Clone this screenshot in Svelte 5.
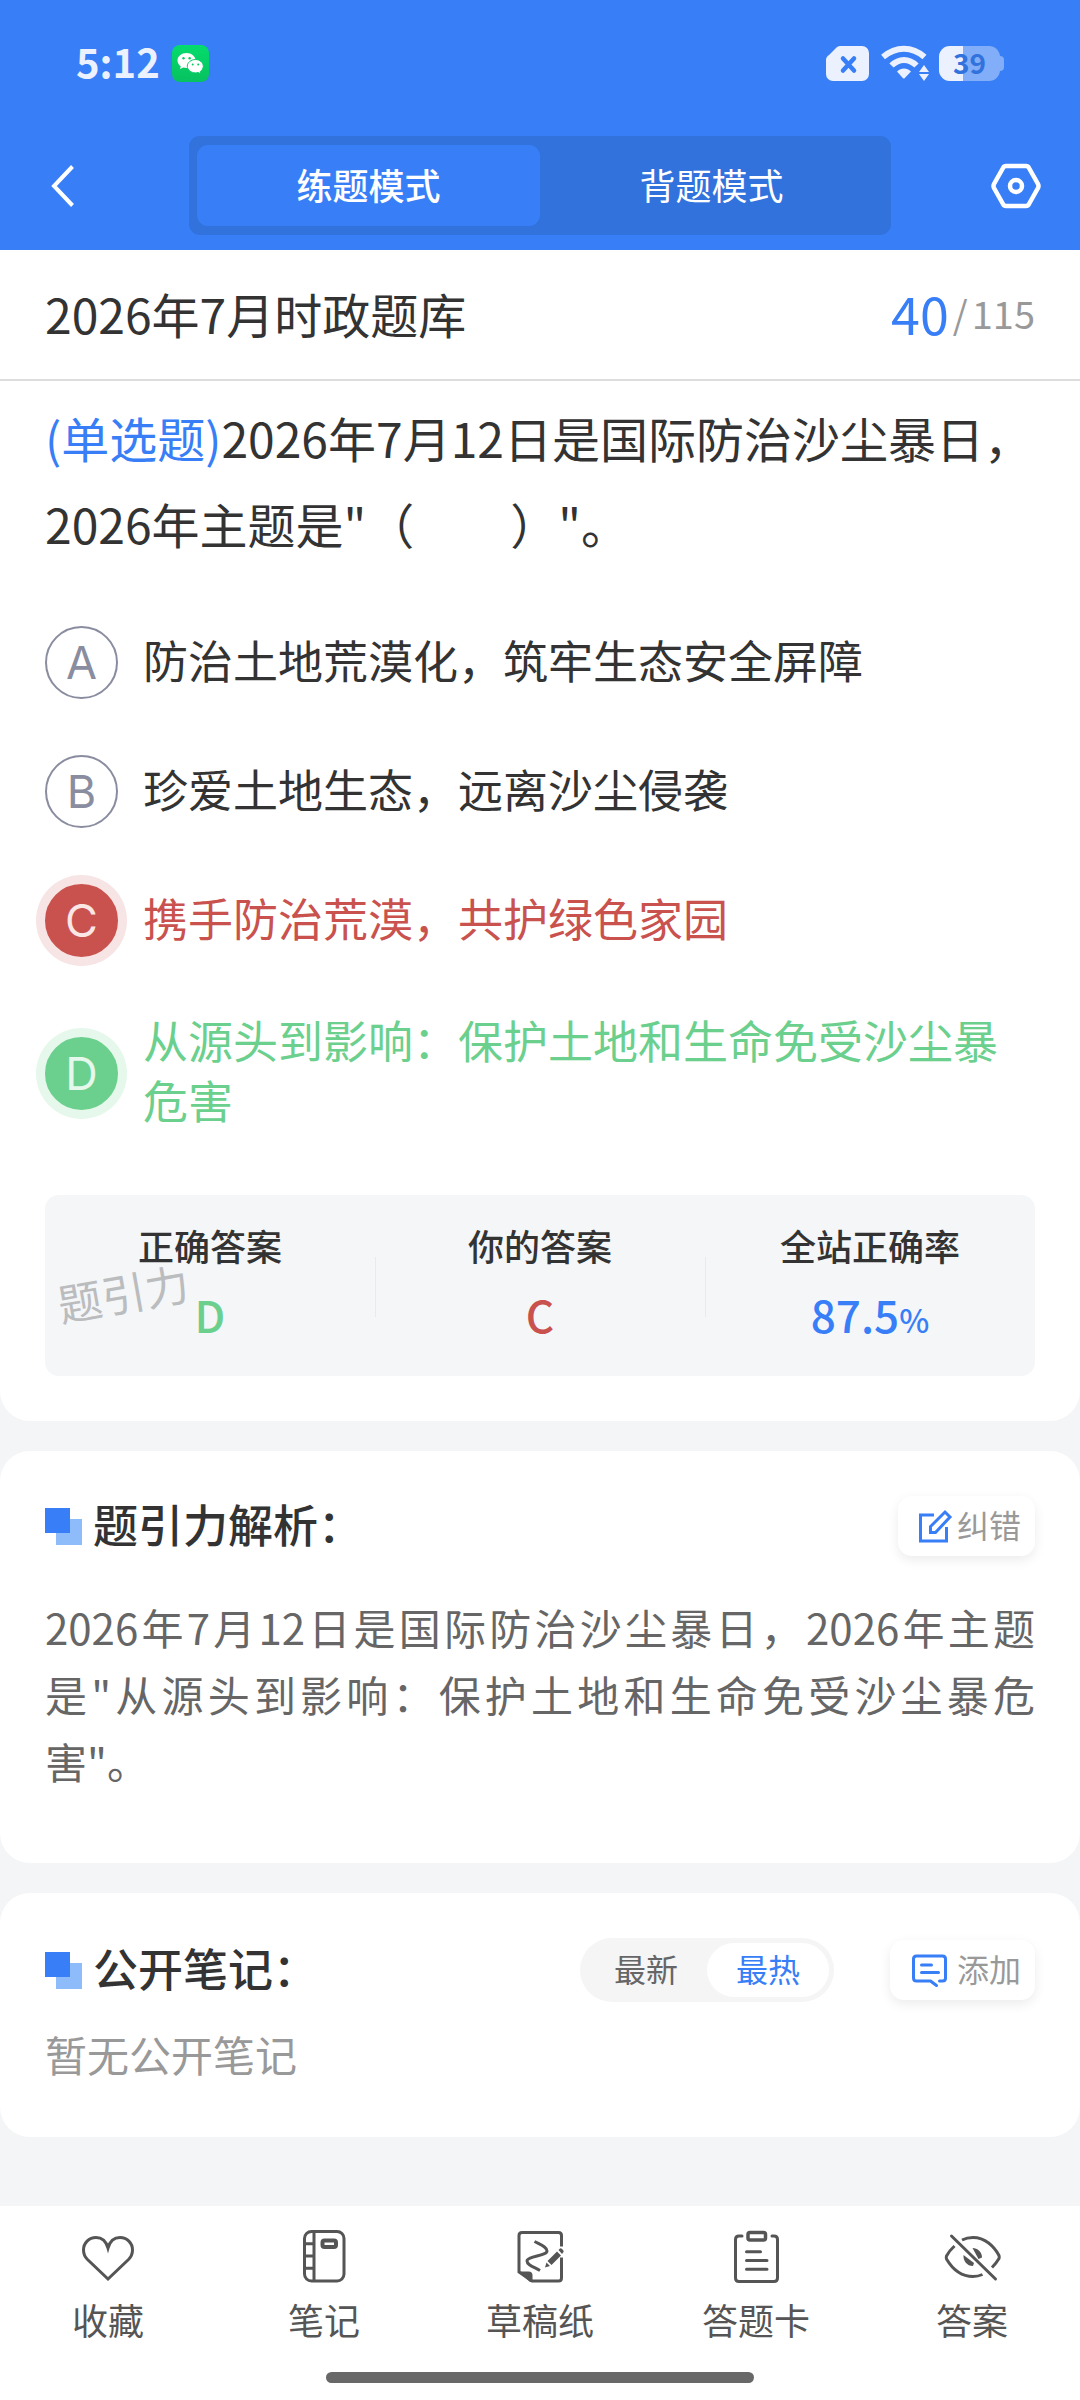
<script lang="ts">
	type Option = { key: string; text: string; state: "" | "wrong" | "right" };

	const modes = ["练题模式", "背题模式"];
	const sorts = ["最新", "最热"];

	const options: Option[] = [
		{ key: "A", text: "防治土地荒漠化，筑牢生态安全屏障", state: "" },
		{ key: "B", text: "珍爱土地生态，远离沙尘侵袭", state: "" },
		{ key: "C", text: "携手防治荒漠，共护绿色家园", state: "wrong" },
		{ key: "D", text: "从源头到影响：保护土地和生命免受沙尘暴危害", state: "right" },
	];

	let mode = $state(0);
	let sort = $state(1);
	let battery = $state(39);
</script>

<div class="page">
	<header class="header">
		<div class="status">
			<span class="time">5:12</span>
			<svg class="wechat" viewBox="0 0 37 37" aria-hidden="true">
				<defs>
					<linearGradient id="wx" x1="0" y1="0" x2="0" y2="1">
						<stop offset="0" stop-color="#04dc6c" />
						<stop offset="1" stop-color="#07c160" />
					</linearGradient>
				</defs>
				<rect width="37" height="37" rx="8" fill="url(#wx)" />
				<path d="M14.500 8C9.500 8 5.500 11.300 5.500 15.500c0 2.400 1.300 4.400 3.300 5.800L8 24l3.300-1.600c1 .3 2.100.5 3.200.5 5 0 9-3.300 9-7.400S19.500 8 14.500 8z" fill="#fff" />
				<circle cx="11.500" cy="13.200" r="1.200" fill="#06cf66" />
				<circle cx="17.600" cy="13.200" r="1.200" fill="#06cf66" />
				<path d="M23.500 14.500c-4.500 0-8.200 3-8.200 6.700s3.700 6.700 8.200 6.700c.9 0 1.800-.1 2.600-.4l2.800 1.300-.6-2.300c1.800-1.200 3-3.100 3-5.300 0-3.700-3.500-6.700-7.800-6.700z" fill="#fff" stroke="#06cb65" stroke-width="1" />
				<circle cx="20.700" cy="19.500" r="1" fill="#06cb65" />
				<circle cx="26.200" cy="19.500" r="1" fill="#06cb65" />
			</svg>

			<svg class="sim" viewBox="0 0 43 35" aria-hidden="true">
				<path d="M14 0h22a7 7 0 0 1 7 7v21a7 7 0 0 1-7 7H7a7 7 0 0 1-7-7V14c0-2 1-4 3-5l7-7c1-1 2-2 4-2z" fill="#ebf1fe" />
				<path d="M17 12.500l11 12M28 12.500l-11 12" stroke="#387ef6" stroke-width="4.500" stroke-linecap="round" />
			</svg>
			<svg class="wifi" viewBox="0 0 47 36" aria-hidden="true">
				<g fill="none" stroke="#ebf1fe" stroke-width="6">
					<path d="M2 12C15 1 31 1 43.500 12" />
					<path d="M10.500 20.500C18 13 28 13 35.500 20.500" />
				</g>
				<path d="M16 26.500c4-4 10-4 14 0L23.800 33q-1 1-2 0z" fill="#ebf1fe" />
				<path d="M43 20l5 7h-10zM38 29h10l-5 7z" fill="#ebf1fe" />
			</svg>
			<span class="battery">
				<span class="cell">
					<span class="charge" style="width: {battery}%"></span>
					<span class="level">{battery}</span>
				</span>
				<span class="cap"></span>
			</span>
		</div>

		<div class="toolbar">
			<button class="icon-btn back" aria-label="返回">
				<svg width="24" height="42" viewBox="0 0 24 42">
					<path d="M21.500 1.500L3 21l18.500 19.500" fill="none" stroke="#fff" stroke-width="4" />
				</svg>
			</button>
			<div class="modes">
				{#each modes as label, i}
					<button class="mode" class:active={mode === i} onclick={() => (mode = i)}>{label}</button>
				{/each}
			</div>
			<button class="icon-btn settings" aria-label="设置">
				<svg width="50" height="46" viewBox="0 0 50 46">
					<g fill="none" stroke="#fff">
						<path d="M15 3h20q2 0 3 2l9 16q1 2 0 4l-9 16q-1 2-3 2H15q-2 0-3-2L3 25q-1-2 0-4l9-16q1-2 3-2z" stroke-width="4.500" />
						<circle cx="25" cy="23" r="6" stroke-width="4.500" />
					</g>
				</svg>
			</button>
		</div>
	</header>

	<main>
		<section class="card question">
			<div class="bank">
				<h1>2026年7月时政题库</h1>
				<p class="progress"><strong>40</strong><span>/</span><span>115</span></p>
			</div>

			<div class="inner">
				<p class="stem"><span class="kind">(单选题)</span>2026年7月12日是国际防治沙尘暴日，2026年主题是"（　　）"。</p>

				<div class="options">
					{#each options as option}
						<button class="option {option.state}">
							<span class="key">{option.key}</span>
							<span class="text">{option.text}</span>
						</button>
					{/each}
				</div>

				<dl class="result">
					<div>
						<dt>正确答案</dt>
						<dd class="right">D</dd>
					</div>
					<div>
						<dt>你的答案</dt>
						<dd class="wrong">C</dd>
					</div>
					<div>
						<dt>全站正确率</dt>
						<dd class="rate">87.5<small>%</small></dd>
					</div>
					<span class="watermark">题引力</span>
				</dl>
			</div>
		</section>

		<section class="card analysis">
			<div class="card-head">
				<span class="mark"></span>
				<h2>题引力解析：</h2>
				<button class="action">
					<svg width="34" height="34" viewBox="0 0 34 34">
						<g fill="none" stroke="#387ef6" stroke-width="3">
							<path d="M16 6H2.500v26h26V18" />
							<path d="M12.500 23.500v-6L27 3l5 5-14.500 15.500z" />
						</g>
					</svg>
					<span>纠错</span>
				</button>
			</div>
			<p class="explain">2026年7月12日是国际防治沙尘暴日，2026年主题是"从源头到影响：保护土地和生命免受沙尘暴危害"。</p>
		</section>

		<section class="card notes">
			<div class="card-head">
				<span class="mark"></span>
				<h2>公开笔记：</h2>
				<div class="sorts">
					{#each sorts as label, i}
						<button class:active={sort === i} onclick={() => (sort = i)}>{label}</button>
					{/each}
				</div>
				<button class="action">
					<svg width="42" height="34" viewBox="0 0 42 34">
						<g fill="none" stroke="#387ef6" stroke-width="3" stroke-linecap="round" stroke-linejoin="round">
							<path d="M29.500 28h3q3 0 3-3V6q0-3-3-3h-26q-3 0-3 3v19q0 3 3 3h14l6 4.500" />
							<path d="M11.500 12h10M11.500 19.500h17" />
						</g>
					</svg>
					<span>添加</span>
				</button>
			</div>
			<p class="empty">暂无公开笔记</p>
		</section>
	</main>

	<nav class="tabbar">
		<div class="tabs">
			<button>
				<svg viewBox="0 0 56 56">
					<path d="M28 20C26 13 21.500 9.500 16 9.500 9 9.500 3.500 15 3.500 22c0 4 1.500 7 4 9.500L28 51l20.500-19.500c2.500-2.500 4-5.500 4-9.500 0-7-5.500-12.500-12.500-12.500-5.500 0-10 3.500-12 10.500z" />
				</svg>
				收藏
			</button>
			<button>
				<svg viewBox="0 0 56 56">
					<rect x="8.500" y="3.500" width="39.500" height="49.500" rx="7" />
					<path d="M18 4v49M9 15.700h9M9 28h9M9 40.300h9" />
					<rect x="26.500" y="12.500" width="13.500" height="6.500" rx="2" stroke-width="4" />
				</svg>
				笔记
			</button>
			<button>
				<svg viewBox="0 0 56 56">
					<path d="M49.500 18.500V7.500q0-3-3-3H10q-3 0-3 3V44l13 9h26.500q3 0 3-3V29.500" />
					<path d="M6 43.500h10.500q4 0 4 4V54H18z" class="solid" />
					<path d="M22.500 13.500C29 17 35 19 35 23c0 5-20 5-20 10 0 4 7 6 13 9.500" />
					<path d="M45 23.500l4 4-9.500 9.500-4-4zM34.500 34.500l3.500 3.500-5 1.500zM46.500 22l1.500-1.500q1-.5 2 .5l1 1q1 1 .5 2L50 26z" class="solid" />
				</svg>
				草稿纸
			</button>
			<button>
				<svg viewBox="0 0 56 56">
					<path d="M14 8h-3q-3.500 0-3.500 3.500V50q0 3.500 3.500 3.500h35q3.500 0 3.500-3.500V11.500Q49.500 8 46 8h-2" stroke-linecap="round" />
					<rect x="20" y="4.500" width="17.500" height="7.500" rx="2" stroke-width="3.500" />
					<path d="M18.500 23.700h14M18.500 32.500h20.500M18.500 41.300h20.500" stroke-linecap="round" />
				</svg>
				答题卡
			</button>
			<button>
				<svg viewBox="0 0 56 56">
					<path d="M18 12q5-2.500 11-2.500C41 9.500 50 18 55 27.500q.5 1.500 0 3-3 5-7 9" />
					<path d="M10.500 18Q5 23 2.500 28q-.5 1.500 0 3C9 42 18 48.500 29 48.500q5 0 9.500-2" />
					<path d="M7.500 8l44 43" stroke-linecap="round" />
					<path d="M28.500 20c5 0 9.500 4 9.500 9.500l-3.500 1.500z M19.500 27c-.5 6 3.500 11 9.500 11l1-3z" class="solid" />
				</svg>
				答案
			</button>
		</div>
		<span class="home"></span>
	</nav>
</div>

<style>
	:global(body) {
		background: #f4f5f7;
	}

	.page {
		display: flex;
		flex-direction: column;
		min-height: 100vh;
		font-family: "Noto Sans CJK SC", sans-serif;
		color: #333;
	}

	h1,
	h2,
	p,
	dl,
	dd {
		margin: 0;
	}

	button {
		padding: 0;
		border: 0;
		background: none;
		font: inherit;
		color: inherit;
		cursor: pointer;
	}

	svg {
		display: block;
		flex: none;
		overflow: visible;
	}

	/* Header */
	.header {
		background: #387ef6;
		color: #fff;
	}

	.status {
		display: flex;
		align-items: center;
		height: 126px;
		padding: 0 76px;
	}

	.time {
		margin-right: 12px;
		padding-bottom: 4px;
		font-size: 40px;
		font-weight: 700;
		line-height: 56px;
		color: #ebf1fe;
	}

	.wechat {
		width: 37px;
		height: 37px;
	}

	.sim {
		width: 43px;
		height: 35px;
		margin-left: auto;
	}

	.wifi {
		width: 47px;
		height: 36px;
		margin: 0 11px 0 12px;
	}

	.battery {
		display: flex;
		align-items: center;
	}

	.cell {
		position: relative;
		width: 61px;
		height: 35px;
		border-radius: 11px;
		background: #82aef9;
	}

	.charge {
		position: absolute;
		inset: 0 auto 0 0;
		border-radius: 11px 0 0 11px;
		background: #ebf1fe;
	}

	.level {
		position: absolute;
		inset: 0;
		line-height: 33px;
		font-size: 28px;
		font-weight: 700;
		text-align: center;
		color: #3272dc;
	}

	.cap {
		width: 4px;
		height: 15px;
		border-radius: 0 4px 4px 0;
		background: #82aef9;
	}

	.toolbar {
		display: grid;
		grid-template-columns: 1fr 65% 1fr;
		align-items: center;
		padding: 10px 0 15px;
	}

	.icon-btn {
		display: flex;
	}

	.back {
		padding-left: 51px;
	}

	.settings {
		justify-content: flex-end;
		padding-right: 39px;
	}

	.modes {
		display: flex;
		padding: 9px 8px;
		border-radius: 11px;
		background: #3172dd;
	}

	.mode {
		flex: 1;
		height: 81px;
		padding-bottom: 4px;
		border-radius: 11px;
		font-size: 36px;
	}

	.mode.active {
		background: #387ef6;
		font-weight: 500;
	}

	/* Cards */
	.card {
		margin-bottom: 30px;
		border-radius: 30px;
		background: #fff;
	}

	.question {
		border-radius: 0 0 30px 30px;
	}

	.bank {
		display: flex;
		justify-content: space-between;
		align-items: center;
		height: 125px;
		padding: 0 45px 4px;
		border-bottom: 2px solid #ddd;
	}

	h1 {
		font-size: 48px;
		font-weight: 400;
	}

	.progress {
		display: flex;
		align-items: center;
		gap: 4px;
		font-size: 38px;
		color: #999;
	}

	.progress strong {
		font-size: 52px;
		font-weight: 400;
		color: #387ef6;
	}

	.inner {
		padding: 13px 45px 45px;
	}

	.stem {
		font-size: 48px;
		line-height: 86px;
	}

	.kind {
		color: #387ef6;
	}

	.options {
		display: flex;
		flex-direction: column;
		gap: 56px;
		margin: 60px 0 62px;
	}

	.option {
		display: flex;
		align-items: center;
		gap: 25px;
		text-align: left;
		font-size: 45px;
		line-height: 60px;
	}

	.key {
		flex: none;
		box-sizing: border-box;
		width: 73px;
		height: 73px;
		border: 2px solid #8a8d9f;
		border-radius: 50%;
		font-family: Inter, sans-serif;
		line-height: 69px;
		text-align: center;
		color: #8a8d9f;
	}

	.text {
		margin: -3px 0 3px;
	}

	.option.wrong {
		color: #c9524e;
	}

	.option.right {
		color: #6bd08d;
	}

	.wrong .key {
		border-color: #c9524e;
		background: #c9524e;
		color: #fbe6e6;
		box-shadow: 0 0 0 9px #f7e4e4;
	}

	.right .key {
		border-color: #6bd08d;
		background: #6bd08d;
		color: #e5f8eb;
		box-shadow: 0 0 0 9px #e5f8eb;
	}

	/* Result */
	.result {
		position: relative;
		display: grid;
		grid-template-columns: repeat(3, 1fr);
		padding: 20px 0 23px;
		border-radius: 14px;
		background: #f4f6f8;
		text-align: center;
	}

	.result div {
		position: relative;
	}

	.result div + div::before {
		content: "";
		position: absolute;
		left: 0;
		top: 42px;
		width: 1px;
		height: 60px;
		background: #e8eaed;
	}

	dt {
		font-size: 36px;
		font-weight: 500;
		line-height: 60px;
	}

	dd {
		font-size: 44px;
		font-weight: 500;
		line-height: 78px;
	}

	dd.right {
		color: #6bd08d;
	}

	dd.wrong {
		color: #c9524e;
	}

	.rate {
		color: #387ef6;
	}

	.rate small {
		font-size: 32px;
		line-height: 1;
	}

	.watermark {
		position: absolute;
		left: 12px;
		top: 65px;
		font-size: 44px;
		line-height: 64px;
		color: #bbbcbe;
		transform: rotate(-10deg);
	}

	/* Analysis and notes */
	.card-head {
		display: flex;
		align-items: center;
		height: 64px;
	}

	.mark {
		width: 37px;
		height: 37px;
		margin-right: 11px;
		background:
			linear-gradient(#387ef6, #387ef6) 0 0 / 25px 25px no-repeat,
			linear-gradient(#8ebbfa, #8ebbfa) 100% 100% / 26px 26px no-repeat;
	}

	h2 {
		margin-right: auto;
		padding-bottom: 4px;
		font-size: 45px;
		font-weight: 500;
		line-height: 60px;
	}

	.action {
		display: flex;
		align-items: center;
		gap: 5px;
		height: 60px;
		padding: 0 14px 0 20px;
		border-radius: 14px;
		background: #fff;
		box-shadow: 0 4px 12px rgba(0, 0, 0, 0.08);
		font-size: 32px;
		color: #999;
	}

	.action span {
		padding-bottom: 4px;
	}

	.analysis {
		padding: 43px 45px 69px;
	}

	.explain {
		margin-top: 35px;
		font-size: 42px;
		line-height: 67px;
		text-align: justify;
		color: #666;
	}

	.notes {
		padding: 45px 45px 50px;
	}

	.sorts {
		display: flex;
		margin-right: 56px;
		padding: 5px;
		border-radius: 32px;
		background: #f5f5f5;
	}

	.sorts button {
		height: 54px;
		padding: 0 29px 4px;
		border-radius: 27px;
		font-size: 32px;
		color: #666;
	}

	.sorts .active {
		background: #fff;
		color: #387ef6;
	}

	.empty {
		margin-top: 18px;
		font-size: 42px;
		line-height: 67px;
		color: #999;
	}

	/* Bottom bar */
	.tabbar {
		position: sticky;
		bottom: 0;
		margin-top: auto;
		padding-bottom: 17px;
		background: #fff;
	}

	.tabs {
		display: grid;
		grid-template-columns: repeat(5, 1fr);
		padding: 22px 0 26px;
	}

	.tabs button {
		display: flex;
		flex-direction: column;
		align-items: center;
		gap: 8px;
		font-size: 36px;
		line-height: 54px;
		color: #555;
	}

	.tabs svg {
		width: 56px;
		height: 56px;
		fill: none;
		stroke: #555;
		stroke-width: 3;
	}

	.tabs .solid {
		fill: #555;
		stroke: none;
	}

	.home {
		display: block;
		width: 428px;
		max-width: 60%;
		height: 11px;
		margin: 0 auto;
		border-radius: 6px;
		background: #686868;
	}
</style>
